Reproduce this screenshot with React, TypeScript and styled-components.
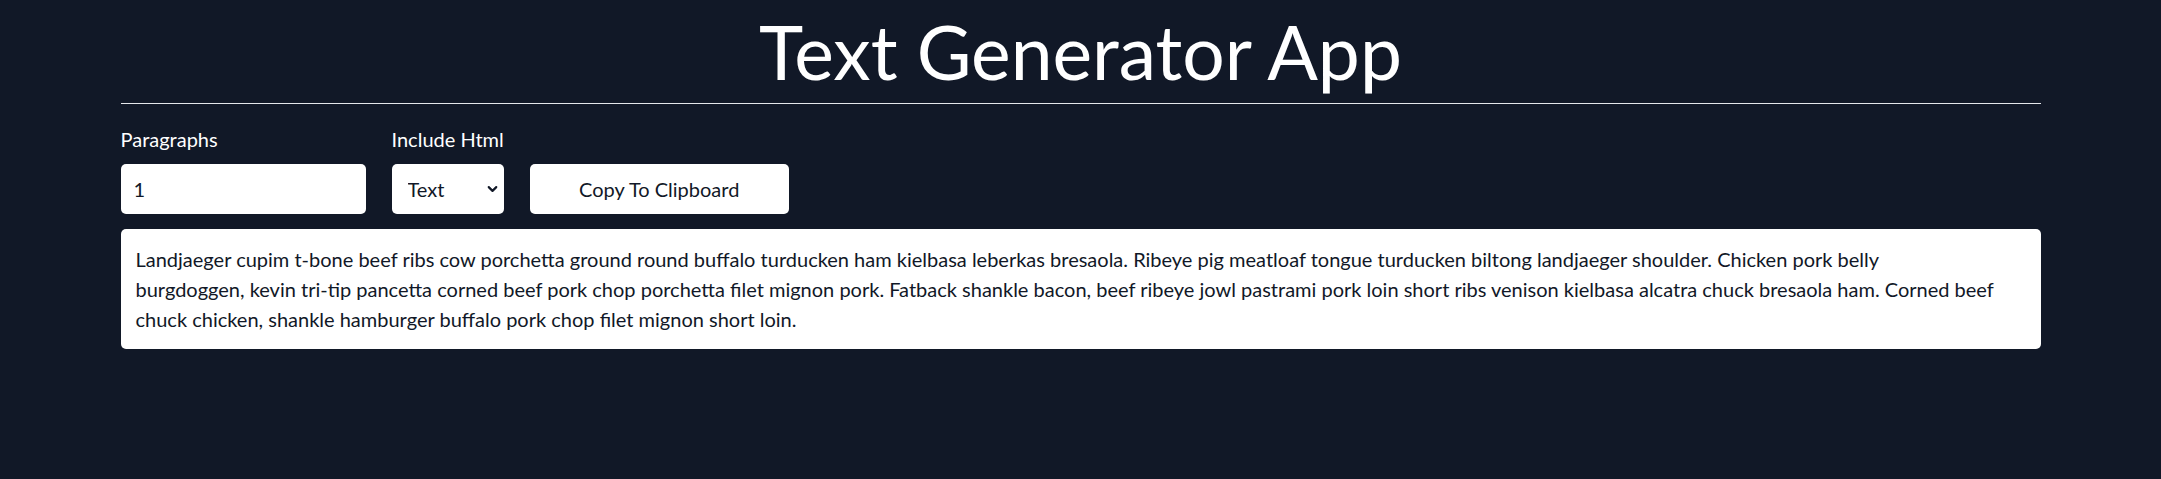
import React, { useState } from 'react';
import styled, { createGlobalStyle } from 'styled-components';
import { ChevronDown } from 'lucide-react';

const GlobalStyle = createGlobalStyle`
  html, body {
    margin: 0;
    padding: 0;
    background: #111827;
  }
  body {
    font-family: Lato, "Open Sans", sans-serif;
  }
  * {
    box-sizing: border-box;
  }
`;

const Page = styled.div`
  width: 1920px;
  margin: 0 auto;
`;

const Title = styled.h1`
  margin: 0;
  padding: 14px 0;
  font-size: 75px;
  line-height: 75px;
  font-weight: 400;
  color: #ffffff;
  text-align: center;
  border-bottom: 1px solid #e5e7eb;
`;

const Controls = styled.div`
  display: flex;
  align-items: flex-end;
  gap: 26px;
  margin-top: 20px;
`;

const Field = styled.div`
  display: flex;
  flex-direction: column;
`;

const Label = styled.label`
  color: #ffffff;
  font-size: 20px;
  line-height: 30px;
  margin-bottom: 10px;
`;

const NumberInput = styled.input`
  width: 245px;
  height: 50px;
  border: none;
  border-radius: 5px;
  padding: 0 13px;
  font-family: inherit;
  font-size: 20px;
  color: #111827;
  background: #ffffff;
  outline: none;
`;

const SelectWrap = styled.div`
  position: relative;
  width: 112px;
  height: 50px;
`;

const Select = styled.select`
  appearance: none;
  width: 100%;
  height: 100%;
  border: none;
  border-radius: 5px;
  padding: 0 16px;
  font-family: inherit;
  font-size: 20px;
  color: #111827;
  background: #ffffff;
  outline: none;
`;

const Chevron = styled.span`
  position: absolute;
  right: 4px;
  top: 50%;
  transform: translateY(-50%);
  display: flex;
  pointer-events: none;
  color: #111827;
`;

const CopyButton = styled.button`
  width: 259px;
  height: 50px;
  border: none;
  border-radius: 5px;
  background: #ffffff;
  font-family: inherit;
  font-size: 20px;
  color: #111827;
  cursor: pointer;
`;

const Output = styled.div`
  margin-top: 15px;
  background: #ffffff;
  border-radius: 5px;
  padding: 15px;
  font-size: 20px;
  line-height: 30px;
  color: #111827;
  white-space: pre-line;
`;

const text =
  'Landjaeger cupim t-bone beef ribs cow porchetta ground round buffalo turducken ham kielbasa leberkas bresaola. Ribeye pig meatloaf tongue turducken biltong landjaeger shoulder. Chicken pork belly\nburgdoggen, kevin tri-tip pancetta corned beef pork chop porchetta filet mignon pork. Fatback shankle bacon, beef ribeye jowl pastrami pork loin short ribs venison kielbasa alcatra chuck bresaola ham. Corned beef chuck chicken, shankle hamburger buffalo pork chop filet mignon short loin.';

export default function App() {
  const [paragraphs, setParagraphs] = useState('1');
  const [format, setFormat] = useState('text');

  return (
    <>
      <GlobalStyle />
      <Page>
        <Title>Text Generator App</Title>
        <Controls>
          <Field>
            <Label htmlFor="paras">Paragraphs</Label>
            <NumberInput
              id="paras"
              type="text"
              value={paragraphs}
              onChange={(e) => setParagraphs(e.target.value)}
            />
          </Field>
          <Field>
            <Label htmlFor="html">Include Html</Label>
            <SelectWrap>
              <Select id="html" value={format} onChange={(e) => setFormat(e.target.value)}>
                <option value="text">Text</option>
                <option value="html">Html</option>
              </Select>
              <Chevron>
                <ChevronDown size={15} strokeWidth={3.5} />
              </Chevron>
            </SelectWrap>
          </Field>
          <CopyButton>Copy To Clipboard</CopyButton>
        </Controls>
        <Output>{text}</Output>
      </Page>
    </>
  );
}
